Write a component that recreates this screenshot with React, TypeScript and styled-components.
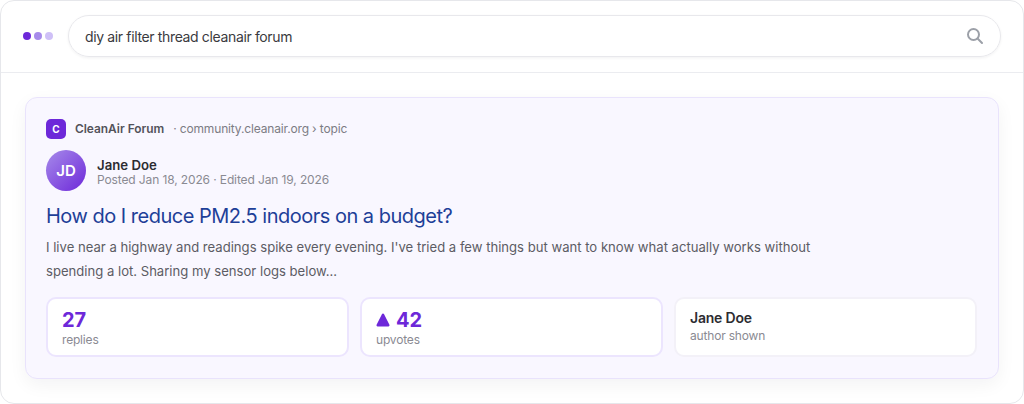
import React from 'react';
import styled, {createGlobalStyle} from 'styled-components';

const GlobalStyle = createGlobalStyle`
    html, body {
        margin: 0;
        padding: 0;
        background: #ffffff;
    }
    body {
        font-family: Inter, "Liberation Sans", sans-serif;
    }
`;

const Frame = styled.div`
    box-sizing: border-box;
    width: 1024px;
    height: 404px;
    background: #ffffff;
    border: 1px solid #e6e7eb;
    border-radius: 14px;
    overflow: hidden;
`;

const TopBar = styled.div`
    box-sizing: border-box;
    height: 72px;
    display: flex;
    align-items: center;
    gap: 15px;
    padding: 0 22px 1px 22px;
    border-bottom: 1px solid #ebecf0;
`;

const Dots = styled.div`
    display: flex;
    gap: 3px;
`;

const Dot = styled.span<{$color: string}>`
    width: 8px;
    height: 8px;
    border-radius: 50%;
    background: ${p => p.$color};
`;

const SearchBox = styled.div`
    box-sizing: border-box;
    flex: 1;
    height: 42px;
    display: flex;
    align-items: center;
    justify-content: space-between;
    padding: 0 16px 0 16px;
    border: 1px solid #e8e8ec;
    border-radius: 21px;
    box-shadow: 0 1px 3px rgba(17, 24, 39, 0.06);
    font-size: 14px;
    letter-spacing: -0.36px;
    color: #3a3a40;
`;

const Content = styled.div`
    padding: 24px 24px 0 24px;
`;

const ResultCard = styled.div`
    box-sizing: border-box;
    height: 282px;
    padding: 20px 21px 20px 20px;
    background: #f9f7ff;
    border: 1px solid #e9e3fc;
    border-radius: 12px;
    box-shadow: 0 6px 18px rgba(17, 24, 39, 0.05);
`;

const SiteRow = styled.div`
    display: flex;
    align-items: center;
    height: 21px;
`;

const SiteIcon = styled.div`
    width: 20px;
    height: 20px;
    border-radius: 5px;
    margin-right: 9px;
    background: #6d28d9;
    color: #ffffff;
    font-size: 10px;
    font-weight: 700;
    display: flex;
    align-items: center;
    justify-content: center;
`;

const SiteName = styled.span`
    font-size: 11.9px;
    font-weight: 600;
    color: #52525a;
`;

const SiteUrl = styled.span`
    font-size: 12px;
    letter-spacing: -0.15px;
    color: #7c7c84;
    margin-left: 9px;
`;

const AuthorRow = styled.div`
    display: flex;
    align-items: center;
    gap: 11px;
    margin-top: 11px;
`;

const Avatar = styled.div`
    width: 40px;
    height: 41px;
    border-radius: 50%;
    background: linear-gradient(135deg, #a78bea, #6d28d9);
    color: #ffffff;
    font-size: 15px;
    font-weight: 600;
    display: flex;
    align-items: center;
    justify-content: center;
`;

const AuthorText = styled.div`
    display: flex;
    flex-direction: column;
    padding-top: 2px;
`;

const AuthorName = styled.div`
    font-size: 13.2px;
    font-weight: 600;
    line-height: 16px;
    color: #2c2c31;
`;

const AuthorMeta = styled.div`
    font-size: 12px;
    letter-spacing: -0.12px;
    line-height: 14px;
    color: #8a8a92;
`;

const Title = styled.div`
    margin-top: 11px;
    font-size: 20px;
    letter-spacing: -0.5px;
    line-height: 28px;
    color: #1e3f98;
`;

const Snippet = styled.div`
    margin-top: 5px;
    width: 790px;
    font-size: 13.1px;
    line-height: 24px;
    color: #5c5c64;
`;

const Stats = styled.div`
    display: grid;
    grid-template-columns: repeat(3, 1fr);
    gap: 11px;
    margin-top: 14px;
`;

const StatBox = styled.div<{$plain?: boolean}>`
    box-sizing: border-box;
    height: 60px;
    padding: ${p => (p.$plain ? '10px' : '9px')} 14px;
    background: #ffffff;
    border: 2px solid ${p => (p.$plain ? '#f3f1f8' : '#ece5fe')};
    border-radius: 10px;
`;

const StatValue = styled.div`
    display: flex;
    align-items: center;
    gap: 6px;
    font-size: 20px;
    font-weight: 700;
    line-height: 24px;
    color: #6d28d9;
`;

const StatName = styled.div`
    margin-top: 1px;
    margin-bottom: 2px;
    font-size: 14px;
    font-weight: 600;
    letter-spacing: -0.2px;
    line-height: 16px;
    color: #2c2c31;
`;

const StatLabel = styled.div`
    font-size: 12px;
    letter-spacing: -0.18px;
    line-height: 16px;
    color: #8a8a92;
`;

const App: React.FC = () => (
    <>
        <GlobalStyle />
        <Frame>
            <TopBar>
                <Dots>
                    <Dot $color="#6d28d9" />
                    <Dot $color="#a78bea" />
                    <Dot $color="#cfc0f7" />
                </Dots>
                <SearchBox>
                    diy air filter thread cleanair forum
                    <svg width="18" height="18" viewBox="0 0 18 18" fill="none" stroke="#9ca0a8" strokeWidth="2" strokeLinecap="round">
                        <circle cx="7.5" cy="7.5" r="5.5" />
                        <path d="M11.8 11.8 L16 16" />
                    </svg>
                </SearchBox>
            </TopBar>
            <Content>
                <ResultCard>
                    <SiteRow>
                        <SiteIcon>C</SiteIcon>
                        <SiteName>CleanAir Forum</SiteName>
                        <SiteUrl>· community.cleanair.org › topic</SiteUrl>
                    </SiteRow>
                    <AuthorRow>
                        <Avatar>JD</Avatar>
                        <AuthorText>
                            <AuthorName>Jane Doe</AuthorName>
                            <AuthorMeta>Posted Jan 18, 2026 · Edited Jan 19, 2026</AuthorMeta>
                        </AuthorText>
                    </AuthorRow>
                    <Title>How do I reduce PM2.5 indoors on a budget?</Title>
                    <Snippet>
                        I live near a highway and readings spike every evening. I've tried a few things but want to know what actually works without spending a lot. Sharing my sensor logs below...
                    </Snippet>
                    <Stats>
                        <StatBox>
                            <StatValue>27</StatValue>
                            <StatLabel>replies</StatLabel>
                        </StatBox>
                        <StatBox>
                            <StatValue>
                                <svg width="14" height="14" viewBox="0 0 14 14" fill="#6d28d9">
                                    <path d="M7 0.5 C7.5 0.5 7.9 0.8 8.1 1.2 L13.4 11.8 C13.8 12.6 13.3 13.4 12.4 13.4 L1.6 13.4 C0.7 13.4 0.2 12.6 0.6 11.8 L5.9 1.2 C6.1 0.8 6.5 0.5 7 0.5 Z" />
                                </svg>
                                42
                            </StatValue>
                            <StatLabel>upvotes</StatLabel>
                        </StatBox>
                        <StatBox $plain>
                            <StatName>Jane Doe</StatName>
                            <StatLabel>author shown</StatLabel>
                        </StatBox>
                    </Stats>
                </ResultCard>
            </Content>
        </Frame>
    </>
);

export default App;
